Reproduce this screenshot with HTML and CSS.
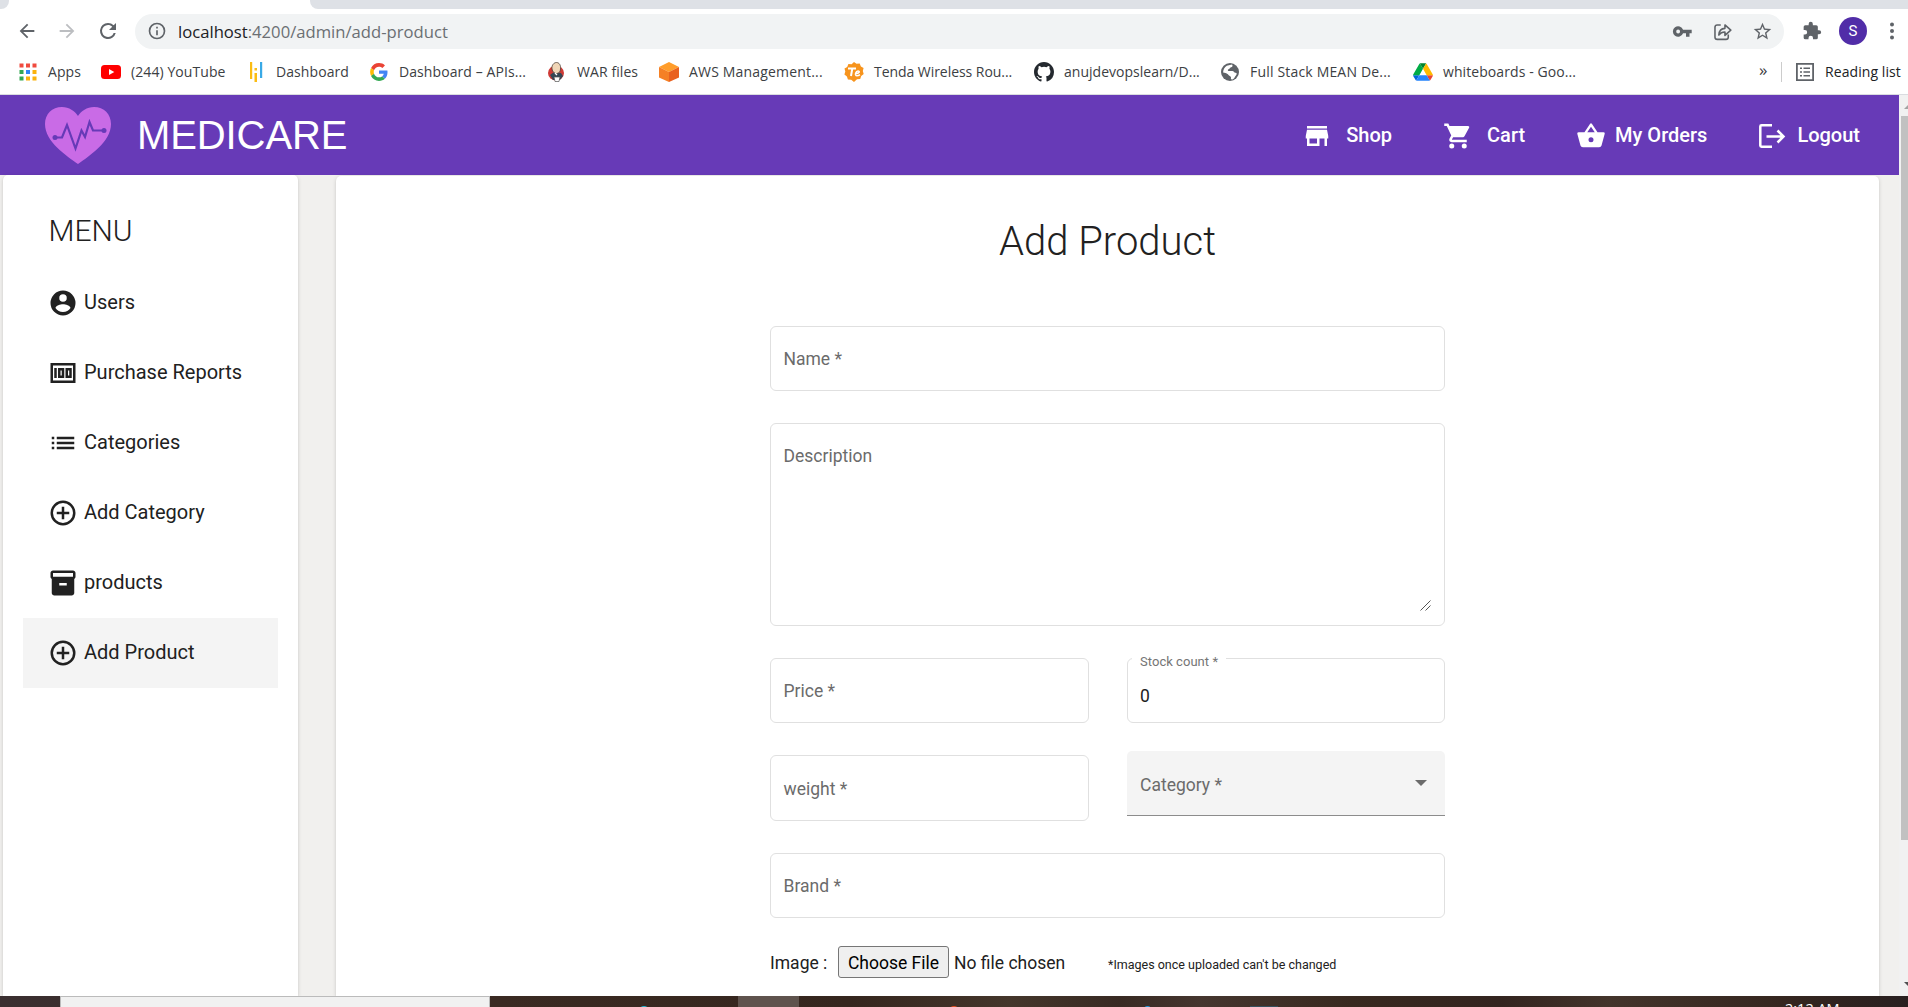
FILE: index.html
```html
<!DOCTYPE html>
<html lang="en">
<head>
<meta charset="utf-8">
<title>Medicare</title>
<link rel="stylesheet" href="styles.css">
</head>
<body>
<div class="tabs"><span class="tab-left"></span><span class="tab-right"></span></div>
<div class="toolbar">
  <svg class="nav-btn" viewBox="0 0 24 24" fill="#5f6368"><path d="M20 11H7.83l5.59-5.59L12 4l-8 8 8 8 1.41-1.41L7.83 13H20z"/></svg>
  <svg class="nav-btn" viewBox="0 0 24 24" fill="#bcbec1"><path d="M12 4l-1.41 1.41L16.17 11H4v2h12.17l-5.58 5.59L12 20l8-8z"/></svg>
  <svg class="nav-btn" viewBox="0 0 24 24" fill="#5f6368"><path d="M17.65 6.35A7.96 7.96 0 0 0 12 4a8 8 0 1 0 7.73 10h-2.08A6 6 0 1 1 12 6c1.66 0 3.14.69 4.22 1.78L13 11h7V4z"/></svg>
  <div class="omnibox">
    <svg class="info" viewBox="0 0 24 24" fill="#5f6368"><path d="M11 17h2v-6h-2zm1-15a10 10 0 1 0 0 20 10 10 0 0 0 0-20zm0 18a8 8 0 1 1 0-16 8 8 0 0 1 0 16zM11 9h2V7h-2z"/></svg>
    <span class="url"><b>localhost</b>:4200/admin/add-product</span>
    <svg class="tool" viewBox="0 0 24 24" fill="#5f6368"><path d="M12.65 10A5.99 5.99 0 1 0 12.65 14H16v4h4v-4h2.5v-4zM7 14.2a2.2 2.2 0 1 1 0-4.4 2.2 2.2 0 0 1 0 4.4z"/></svg>
    <svg class="tool" viewBox="0 0 24 24" fill="none" stroke="#5f6368" stroke-width="1.8" stroke-linejoin="round"><path d="M10 4.5H6A2.6 2.6 0 0 0 3.400 7v11.500A2.600 2.600 0 0 0 6 21h10a2.600 2.600 0 0 0 2.600-2.500V15.500M7.800 16c.3-5 2.700-7.400 7-7.600V4.500l6.700 6-6.700 6v-4c-3-.1-5.200 1-7 3.500z"/></svg>
    <svg class="tool" viewBox="0 0 24 24" fill="#5f6368"><path d="M22 9.24l-7.19-.62L12 2 9.190 8.630 2 9.240l5.460 4.730L5.820 21 12 17.270 18.180 21l-1.630-7.030zM12 15.400l-3.760 2.270 1-4.280-3.320-2.880 4.380-.38L12 6.100l1.710 4.040 4.380.38-3.320 2.880 1 4.280z"/></svg>
  </div>
  <svg class="ext" viewBox="0 0 24 24" fill="#5f6368"><path d="M20.500 11H19V7a2 2 0 0 0-2-2h-4V3.500a2.500 2.500 0 0 0-5 0V5H4a2 2 0 0 0-2 2v3.800h1.500a2.700 2.700 0 0 1 0 5.400H2V20a2 2 0 0 0 2 2h3.800v-1.500a2.700 2.700 0 0 1 5.400 0V22H17a2 2 0 0 0 2-2v-4h1.500a2.500 2.500 0 0 0 0-5z"/></svg>
  <span class="avatar">S</span>
  <svg class="kebab" viewBox="0 0 6 18" fill="#5f6368"><circle cx="3" cy="2.500" r="2"/><circle cx="3" cy="9" r="2"/><circle cx="3" cy="15.500" r="2"/></svg>
</div>
<div class="bookmarks">
  <div class="bm"><svg viewBox="0 0 20 20"><path fill="#f04b3f" d="M1.500 1.500h4v4h-4zM8 1.500h4v4H8zM14.500 1.500h4v4h-4z"/><path fill="#34a853" d="M1.500 8h4v4h-4zM1.500 14.500h4v4h-4z"/><path fill="#2f86f6" d="M8 8h4v4H8z"/><path fill="#fbb20b" d="M14.500 8h4v4h-4zM8 14.500h4v4H8zM14.500 14.500h4v4h-4z"/></svg>Apps</div>
  <div class="bm"><svg viewBox="0 0 20 20"><rect y="3" width="20" height="14" rx="3.500" fill="red"/><path fill="#fff" d="M8 7l5.300 3L8 13z"/></svg>(244) YouTube</div>
  <div class="bm"><svg viewBox="0 0 20 20"><path fill="#fbbc13" d="M4 0h2.200v17H4zM8.500 6h2.500v2.500H8.500zM8.500 11h2.500v9H8.500z"/><path fill="#39a9e6" d="M14 0h2.200v16H14z"/></svg>Dashboard</div>
  <div class="bm"><svg viewBox="-3 -3 54 54"><path fill="#EA4335" d="M24 9.500c3.540 0 6.710 1.220 9.210 3.600l6.850-6.850C35.900 2.380 30.470 0 24 0 14.620 0 6.510 5.380 2.560 13.220l7.980 6.190C12.430 13.720 17.740 9.500 24 9.500z"/><path fill="#4285F4" d="M46.980 24.550c0-1.570-.15-3.090-.38-4.550H24v9.020h12.940c-.58 2.960-2.260 5.480-4.780 7.180l7.730 6c4.510-4.180 7.090-10.360 7.090-17.650z"/><path fill="#FBBC05" d="M10.530 28.590A14.500 14.500 0 0 1 9.770 24c0-1.600.27-3.140.76-4.590l-7.980-6.190A23.900 23.900 0 0 0 0 24c0 3.880.92 7.540 2.560 10.780z"/><path fill="#34A853" d="M24 48c6.480 0 11.930-2.130 15.890-5.810l-7.730-6c-2.150 1.450-4.920 2.300-8.160 2.300-6.260 0-11.570-4.220-13.470-9.910l-7.980 6.190C6.510 42.620 14.620 48 24 48z"/></svg>Dashboard – APIs...</div>
  <div class="bm"><svg viewBox="0 0 20 20"><ellipse cx="9" cy="11" rx="8" ry="7.500" fill="#cf3a35"/><path fill="#344756" d="M3 13l4-3 7 1 2 3-3 4H6z"/><path fill="#f0d6b7" stroke="#4c4038" stroke-width=".8" d="M5 7c-.5-4 2-6.500 4.500-6.500S14 3 13.500 7c0 3-2 4.500-4 4.500S5.500 10 5 7z"/><path stroke="#fff" stroke-width="1.300" d="M8 11l2 2"/><path fill="#fff" stroke="#555" stroke-width=".7" d="M7 15h6l-1 4.500H8z"/></svg>WAR files</div>
  <div class="bm"><svg viewBox="0 0 20 20"><path fill="#ff9d2b" d="M10 0l10 5-10 5L0 5z"/><path fill="#f58025" d="M0 5l10 5v10L0 15.500z"/><path fill="#e9611f" d="M20 5l-10 5v10l10-4.500z"/></svg>AWS Management...</div>
  <div class="bm"><svg viewBox="0 0 20 20"><path fill="#f7941d" d="M10 0l2.500 1.700 3.200-.3 1.200 3 2.700 1.600-.8 3 .9 3-2.500 2-1 3-3.200.2L10 20l-2.800-2.200-3.300-.2-1-3-2.500-2 .9-3-.8-3 2.700-1.600 1.200-3 3.200.3z"/><path fill="none" stroke="#fff" stroke-width="2" d="M4 6.500h8M8.300 6.500L7 14"/><path fill="none" stroke="#fff" stroke-width="1.500" d="M11 11.500c5 0 5-2.500 3-2.500s-4 4.500-1 4.700c1.500 0 2-.4 3-1"/></svg>Tenda Wireless Rou...</div>
  <div class="bm"><svg viewBox="0 0 16 16" fill="#24292f"><path d="M8 0C3.580 0 0 3.580 0 8c0 3.540 2.290 6.530 5.470 7.590.4.070.55-.17.55-.38 0-.19-.01-.82-.01-1.490-2.010.37-2.530-.49-2.690-.94-.09-.23-.48-.94-.82-1.130-.28-.15-.68-.52-.01-.53.63-.01 1.080.58 1.230.82.72 1.210 1.870.87 2.330.66.070-.52.28-.87.510-1.070-1.780-.2-3.640-.89-3.640-3.950 0-.87.310-1.590.82-2.150-.08-.2-.36-1.020.08-2.120 0 0 .67-.21 2.200.82a7.600 7.600 0 0 1 4 0c1.530-1.040 2.200-.82 2.200-.82.44 1.100.16 1.920.08 2.120.51.56.82 1.270.82 2.150 0 3.070-1.870 3.750-3.650 3.950.29.25.54.73.54 1.480 0 1.070-.01 1.930-.01 2.200 0 .21.15.46.55.38A8.010 8.010 0 0 0 16 8c0-4.420-3.580-8-8-8z"/></svg>anujdevopslearn/D...</div>
  <div class="bm"><svg viewBox="0 0 20 20"><circle cx="10" cy="10" r="9" fill="#5f6368"/><path fill="#fff" d="M12 2.500c1 1 .5 2.500-1 2.800-1.500.4-.8 1.700-2.500 1.900-1.200.2-.7 1.900.7 1.900h3.300c1.300 0 1.500 1.800 3 1.700 1.500 0 1.600 1.400.4 2.700-1.200 1.400-1.500 3.200-3.400 3.900-1.400.4-1.800-.6-1.500-1.900.2-1-.9-1.200-2-2-1.200-1-2.200-2.600-5.900-2.900 0-3 1.500-5.500 3.700-6.900z"/><path fill="#5f6368" d="M11 7.500l3-1.500 2.500 2-2 1.500z"/></svg>Full Stack MEAN De...</div>
  <div class="bm"><svg viewBox="0 -5 87.300 88"><path fill="#0066da" d="M6.600 66.850l3.850 6.650c.8 1.400 1.950 2.500 3.300 3.300L27.500 53H0c0 1.550.4 3.100 1.200 4.500z"/><path fill="#00ac47" d="M43.650 25L29.900 1.200c-1.350.8-2.500 1.900-3.300 3.300l-25.400 44A9 9 0 0 0 0 53h27.500z"/><path fill="#ea4335" d="M73.550 76.800c1.350-.8 2.500-1.900 3.300-3.300l1.600-2.750L86.100 57.500c.8-1.400 1.200-2.950 1.200-4.500H59.800l5.850 11.500z"/><path fill="#00832d" d="M43.650 25L57.400 1.200C56.050.4 54.500 0 52.900 0H34.400c-1.600 0-3.150.45-4.500 1.200z"/><path fill="#2684fc" d="M59.800 53H27.500L13.750 76.800c1.350.8 2.900 1.200 4.500 1.200h50.800c1.600 0 3.150-.45 4.500-1.200z"/><path fill="#ffba00" d="M73.400 26.500l-12.700-22c-.8-1.400-1.950-2.500-3.300-3.300L43.650 25 59.800 53h27.450c0-1.550-.4-3.100-1.200-4.500z"/></svg>whiteboards - Goo...</div>
  <span class="more">»</span>
  <span class="divider"></span>
  <svg class="list-ico" viewBox="0 0 18 18" fill="#5f6368"><path fill-rule="evenodd" d="M0 0h18v18H0zM1.800 1.800v14.400h14.400V1.800z"/><path d="M4 4.500h2v1.600H4zM7.500 4.500H14v1.600H7.500zM4 8.200h2v1.600H4zM7.500 8.200H14v1.600H7.500zM4 11.900h2v1.600H4zM7.500 11.900H14v1.600H7.500z"/></svg>
  <span class="reading">Reading list</span>
</div>
<div class="viewport">
  <div class="page">
    <header class="header">
      <svg class="heart" viewBox="0 0 66 57"><path fill="#c96be6" d="M33 57C22 49 0 35 0 17 0 7 7 0 17 0c7 0 13 4 16 9 3-5 9-9 16-9 10 0 17 7 17 17 0 18-22 32-33 40z"/><path fill="none" stroke="#673ab7" stroke-width="2.200" d="M10 30.500h7l5-12.500 8.500 23.500 6-18 3.500 6.500L44.500 15l3.500 8.500h11"/><circle cx="10" cy="30.500" r="2.500" fill="#673ab7"/><circle cx="59" cy="23.500" r="2.500" fill="#673ab7"/></svg>
      <span class="brand">MEDICARE</span>
      <nav class="links">
        <a class="link shop"><svg viewBox="0 0 24 24"><path d="M20 4H4v2h16zm1 10v-2l-1-5H4l-1 5v2h1v6h10v-6h4v6h2v-6zm-9 4H6v-4h6z"/></svg>Shop</a>
        <a class="link cart"><svg viewBox="0 0 24 24"><path d="M7 18a2 2 0 1 0 0 4 2 2 0 0 0 0-4zM1 2v2h2l3.600 7.590-1.350 2.450C4.520 15.370 5.480 17 7 17h12v-2H7.420a.25.25 0 0 1-.25-.25l.03-.12.9-1.630h7.450c.75 0 1.410-.41 1.750-1.030l3.580-6.490A1 1 0 0 0 20 4H5.210l-.94-2zm16 16a2 2 0 1 0 0 4 2 2 0 0 0 0-4z"/></svg>Cart</a>
        <a class="link orders"><svg viewBox="0 0 24 24"><path d="M17.210 9l-4.380-6.560a.99.99 0 0 0-1.660 0L6.790 9H2a1 1 0 0 0-.96 1.270l2.540 9.270A2 2 0 0 0 5.500 21h13a2 2 0 0 0 1.930-1.460l2.540-9.270L23 10a1 1 0 0 0-1-1zM9 9l3-4.400L15 9zm3 8a2 2 0 1 1 0-4 2 2 0 0 1 0 4z"/></svg>My Orders</a>
        <a class="link logout"><svg viewBox="0 0 30 30"><path fill="none" stroke="#fff" stroke-width="2.500" d="M16 4.200H5.500q-1.200 0-1.200 1.200v19.200q0 1.200 1.200 1.200H16M10.500 15.500H27M21.500 9.500l6 6-6 6"/></svg>Logout</a>
      </nav>
    </header>
    <div class="content">
      <aside class="sidebar">
        <h2 class="menu-title">MENU</h2>
        <a class="item"><svg viewBox="0 0 24 24"><path d="M12 2a10 10 0 1 0 0 20 10 10 0 0 0 0-20zm0 3a3 3 0 1 1 0 6 3 3 0 0 1 0-6zm0 14.200a7.200 7.200 0 0 1-6-3.220c.03-1.990 4-3.080 6-3.080 1.990 0 5.970 1.090 6 3.080a7.200 7.200 0 0 1-6 3.220z"/></svg>Users</a>
        <a class="item"><svg viewBox="0 0 24 24"><path fill-rule="evenodd" d="M2 4h20v16H2zM4 6v12h16V6zM5 8h2v8H5zM8 8h5v8H8zM10 10v4h1v-4zM14 8h5v8h-5zM16 10v4h1v-4z"/></svg>Purchase Reports</a>
        <a class="item"><svg viewBox="0 0 24 24"><path d="M3 13h2v-2H3zm0 4h2v-2H3zm0-8h2V7H3zm4 4h14v-2H7zm0 4h14v-2H7zM7 7v2h14V7z"/></svg>Categories</a>
        <a class="item"><svg viewBox="0 0 24 24"><path d="M13 7h-2v4H7v2h4v4h2v-4h4v-2h-4zm-1-5a10 10 0 1 0 0 20 10 10 0 0 0 0-20zm0 18a8 8 0 1 1 0-16 8 8 0 0 1 0 16z"/></svg>Add Category</a>
        <a class="item"><svg viewBox="0 0 24 24"><path fill-rule="evenodd" d="M20 2H4C3 2 2 2.900 2 4v3.010c0 .72.43 1.340 1 1.690V20c0 1.100 1.100 2 2 2h14c.9 0 2-.9 2-2V8.700c.57-.35 1-.97 1-1.690V4c0-1.100-1-2-2-2zm-5 12H9v-2h6zm5-7H4V4h16z"/></svg>products</a>
        <a class="item active"><svg viewBox="0 0 24 24"><path d="M13 7h-2v4H7v2h4v4h2v-4h4v-2h-4zm-1-5a10 10 0 1 0 0 20 10 10 0 0 0 0-20zm0 18a8 8 0 1 1 0-16 8 8 0 0 1 0 16z"/></svg>Add Product</a>
      </aside>
      <main class="card">
        <form class="form">
          <h1 class="title">Add Product</h1>
          <div class="field wide">Name *</div>
          <div class="field wide area">Description
            <svg class="grip" viewBox="0 0 11 11" fill="none" stroke="#555"><path d="M.5 10.500l10-10M5.500 10.500l5-5"/></svg>
          </div>
          <div class="field">Price *</div>
          <div class="field stock"><span class="float">Stock count *</span>0</div>
          <div class="field weight">weight *</div>
          <div class="select">Category *<span class="arrow"></span></div>
          <div class="field wide">Brand *</div>
          <div class="file wide">
            <span class="file-label">Image :</span>
            <span class="file-btn">Choose File</span>
            <span class="file-name">No file chosen</span>
            <span class="note">*Images once uploaded can't be changed</span>
          </div>
        </form>
      </main>
    </div>
  </div>
  <div class="scrollbar"><span class="up"></span><span class="thumb"></span><span class="down"></span></div>
</div>
<div class="taskbar">
  <span class="search"></span>
  <span class="task-active"></span>
  <i class="blob cyan"></i><i class="blob orange"></i><i class="blob blue"></i><i class="blob teal"></i>
  <span class="clock">2:12 AM</span>
</div>
</body>
</html>
```
FILE: styles.css
```css
* { box-sizing: border-box; }
html, body { height: 100%; }
body {
  margin: 0;
  display: flex;
  flex-direction: column;
  height: 1007px;
  overflow: hidden;
  background: #fff;
  font-family: Roboto, "Liberation Sans", sans-serif;
  color: #212121;
}
svg { display: block; flex: none; }

/* browser chrome */
.tabs { display: flex; justify-content: space-between; height: 9px; flex: none; }
.tab-left { width: 9px; background: #dee1e6; border-bottom-right-radius: 8px; }
.tab-right { width: 1598px; background: #dee1e6; border-bottom-left-radius: 8px; }
.toolbar { display: flex; align-items: center; height: 44px; flex: none; padding: 1px 10px 0 16px; margin-bottom: 1px; }
.nav-btn { width: 22px; height: 22px; margin: -1px 18px 0 0; }
.nav-btn:nth-child(3) { width: 24px; height: 24px; margin-right: 15px; }
.omnibox {
  display: flex;
  align-items: center;
  width: 1649px;
  height: 35px;
  padding: 0 11px 1px 12px;
  background: #f1f3f4;
  border-radius: 18px;
}
.info { width: 20px; height: 20px; margin-right: 11px; }
.url { flex: 1; padding-top: 1px; font: 16.65px "Open Sans", sans-serif; color: #6b6f73; }
.url b { font-weight: 400; color: #202124; }
.tool { width: 21px; height: 21px; margin-left: 19px; }
.ext { width: 20px; height: 20px; margin: -2px 17px 0 18px; }
.avatar {
  width: 28px; height: 28px; margin-top: -1px; border-radius: 50%;
  background: #512da8; color: #fff; font-size: 15px; line-height: 28px; text-align: center;
}
.kebab { width: 6px; height: 18px; margin: -1px 0 0 22px; }
.bookmarks {
  display: grid;
  grid-template-columns: 83px 145px 123px 178px 112px 185px 190px 186px 193px 346px 22px 15px 29px auto;
  align-items: center;
  height: 41px;
  flex: none;
  padding: 0 0 5px 18px;
  border-bottom: 1px solid #dadce0;
  font: 14px "Open Sans", sans-serif;
  letter-spacing: .08px;
  color: #3c4043;
  white-space: nowrap;
}
.bm { display: flex; align-items: center; gap: 10px; }
.bm:nth-child(6), .bm:nth-child(9) { letter-spacing: .18px; }
.bm:nth-child(7) { letter-spacing: -.05px; }
.bm:nth-child(8) { letter-spacing: .02px; }
.bm svg { width: 20px; height: 20px; }
.more { font-size: 17px; line-height: 18px; margin-top: -4px; color: #3c4043; }
.divider { width: 1px; height: 20px; background: #ccc; }
.list-ico { width: 18px; height: 18px; }
.reading { color: #202124; }

/* page */
.viewport { display: flex; flex: 1; min-height: 0; background: #f1f0ee; }
.page { width: 1899px; display: flex; flex-direction: column; overflow: hidden; }
.header { display: flex; align-items: center; height: 80px; flex: none; padding: 0 39px 0 45px; background: #673ab7; color: #fff; }
.heart { width: 66px; height: 57px; }
.brand { margin-left: 26px; font: 40px "Liberation Sans", sans-serif; letter-spacing: -.1px; }
.links { display: flex; margin-left: auto; }
.link { display: flex; align-items: center; font-size: 20px; font-weight: 500; line-height: 24px; padding-bottom: 1px; }
.link svg { width: 30px; height: 30px; margin: 3px 14px 0 0; fill: #fff; }
.cart { margin-left: 51px; }
.orders { margin-left: 51px; }
.orders svg { margin-right: 9px; }
.logout { margin-left: 49px; }
.logout svg { margin-right: 11px; }
.content { display: flex; gap: 38px; flex: 1; min-height: 0; padding: 0 20px 0 3px; }
.sidebar, .card {
  background: #fff;
  border-radius: 5px 5px 0 0;
  box-shadow: 0 2px 1px -1px rgba(0,0,0,.2), 0 1px 1px rgba(0,0,0,.14), 0 1px 4px rgba(0,0,0,.14);
}
.sidebar { width: 295px; padding: 38px 20px 0; }
.menu-title { margin: 0 0 20px; padding-left: 25.5px; font-size: 30px; font-weight: 300; line-height: 35px; }
.item { display: flex; align-items: center; height: 70px; padding: 0 0 2px 25px; font-size: 20px; line-height: 26px; }
.item svg { width: 30px; height: 30px; margin: 2px 6px 0 0; fill: #212121; }
.item.active { background: #f4f4f4; }
.card { width: 1543px; margin-top: 1px; display: flex; justify-content: center; }
.form {
  display: grid;
  grid-template-columns: 319px 318px;
  column-gap: 38px;
  row-gap: 32px;
  align-content: start;
  width: 675px;
  padding-top: 46px;
  font-size: 17.5px;
}
.title { grid-column: 1 / -1; margin: 0 0 32px; font-size: 40px; font-weight: 300; line-height: 40px; text-align: center; height: 40px; }
.wide { grid-column: 1 / -1; }
.field { position: relative; height: 65px; border: 1px solid #e0e0e0; border-radius: 6px; padding: 0 12.5px; line-height: 65px; color: #6b6b6b; }
.area { height: 203px; }
.grip { position: absolute; right: 13px; bottom: 14px; width: 11px; height: 11px; }
.stock { padding-left: 12px; line-height: 75px; color: #212121; }
.float { position: absolute; left: 4px; top: -6px; padding: 0 8px; background: #fff; font-size: 13px; line-height: 18px; letter-spacing: .04px; color: #757575; }
.weight { height: 66px; line-height: 66px; }
.select {
  display: flex; align-items: center; justify-content: space-between;
  height: 65px; margin-top: -4px; padding: 4px 18px 0 13px;
  background: #f4f4f4; border-bottom: 1px solid #8c8c8c; border-radius: 5px 5px 0 0; color: #6b6b6b;
}
.arrow { border: 6.5px solid transparent; border-top-color: #6b6b6b; border-bottom: 0; margin-top: -4px; }
.file { display: flex; align-items: center; height: 32px; margin-top: -4px; white-space: nowrap; }
.file-label { width: 68px; padding-top: 1px; }
.file-btn { width: 111px; height: 32px; border: 1px solid #767676; border-radius: 3px; background: #efefef; color: #000; text-align: center; line-height: 32px; }
.file-name { width: 159px; padding: 1px 0 0 5px; }
.note { font-size: 12.5px; padding-top: 4px; }
.scrollbar { position: relative; width: 9px; background: #f1f1f1; overflow: hidden; }
.thumb { position: absolute; left: 2px; top: 21px; width: 7px; height: 724px; background: #c1c1c1; }
.up, .down { position: absolute; left: 5px; border: 5px solid transparent; }
.up { top: 9px; border-top: 0; border-bottom-color: #a3a3a3; }
.down { bottom: 9px; border-bottom: 0; border-top-color: #505050; }

/* desktop taskbar */
.taskbar {
  position: relative;
  display: flex;
  height: 11px;
  flex: none;
  padding-left: 60px;
  overflow: hidden;
  background: linear-gradient(90deg, #3a2f30 0, #3a2a22 500px, #35261e 850px, #44362b 1010px, #382a23 1120px, #45362f 1200px, #38291f 1350px, #33241f 1500px, #43342b 1610px, #35261f 1780px, #292020 1908px);
}
.search { width: 430px; background: #f1f1f1; border: 1px solid #bbb; border-bottom: 0; }
.task-active { width: 61px; margin-left: 248px; background: #5f534d; }
.blob { position: absolute; top: 10px; width: 12px; height: 8px; border-radius: 6px 6px 0 0; }
.cyan { left: 638px; background: #22b8d6; }
.orange { left: 948px; background: #e8501f; }
.blue { left: 1144px; width: 7px; background: #1f9be0; }
.teal { left: 1250px; width: 28px; background: #35505c; border-radius: 0; }
.clock { position: absolute; left: 1785px; top: 3px; font: 14.5px "Open Sans", sans-serif; color: #fff; white-space: nowrap; }
```
